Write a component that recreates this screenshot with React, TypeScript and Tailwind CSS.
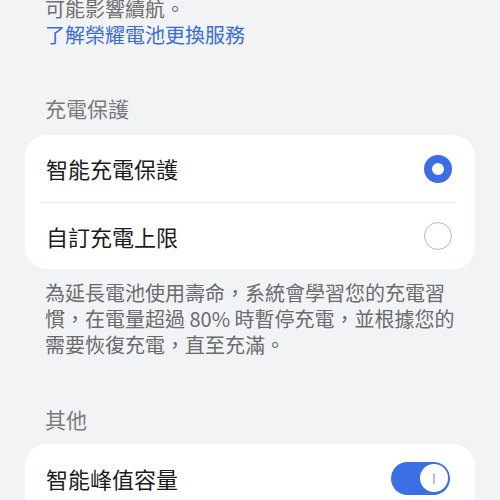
export default function App() {
  const font = { fontFamily: '"Noto Sans CJK TC", "Noto Sans", sans-serif' };

  return (
    <div style={font} className="w-[500px] h-[500px] overflow-hidden bg-[#f1f3f5]">
      <div className="px-[45px] mt-[-4px] text-[20px] leading-[26px]">
        <p className="text-[#6f6f6f]">可能影響續航。</p>
        <p className="text-[#3a6be0]">了解榮耀電池更換服務</p>
      </div>

      <h2 className="px-[45px] mt-[45px] mb-[12px] text-[21px] leading-[30px] text-[#7a7a7a]">充電保護</h2>

      <div className="mx-[25px] rounded-[22px] bg-white">
        <div className="flex items-center justify-between h-[67px] pl-[21px] pr-[23px]">
          <span className="text-[22px] text-[#1c1c1c]">智能充電保護</span>
          <span className="w-[28px] h-[28px] rounded-full border-[8px] border-[#3b6de8] bg-white" />
        </div>
        <div className="ml-[16px] mr-[20px] h-px bg-[#e6e6e6]" />
        <div className="flex items-center justify-between h-[66px] pl-[21px] pr-[23px]">
          <span className="text-[22px] text-[#1c1c1c]">自訂充電上限</span>
          <span className="w-[28px] h-[28px] rounded-full border-[1.5px] border-[#b8b8b8] bg-white" />
        </div>
      </div>

      <p className="px-[45px] mt-[11px] text-[20px] leading-[26px] text-[#6b6b6b]">
        為延長電池使用壽命，系統會學習您的充電習慣，在電量超過 80% 時暫停充電，並根據您的需要恢復充電，直至充滿。
      </p>

      <h2 className="px-[45px] mt-[46px] mb-[10px] text-[21px] leading-[30px] text-[#7a7a7a]">其他</h2>

      <div className="mx-[25px] rounded-t-[22px] bg-white">
        <div className="flex items-center justify-between h-[68px] pl-[21px] pr-[25px]">
          <span className="text-[22px] text-[#1c1c1c]">智能峰值容量</span>
          <span className="flex items-center justify-end w-[59px] h-[33px] rounded-full bg-[#3a6fe6] pr-[2.5px]">
            <span className="flex items-center justify-center w-[28px] h-[28px] rounded-full bg-white">
              <span className="w-[2px] h-[11px] rounded-full bg-[#a9c1f2]" />
            </span>
          </span>
        </div>
      </div>
    </div>
  );
}
